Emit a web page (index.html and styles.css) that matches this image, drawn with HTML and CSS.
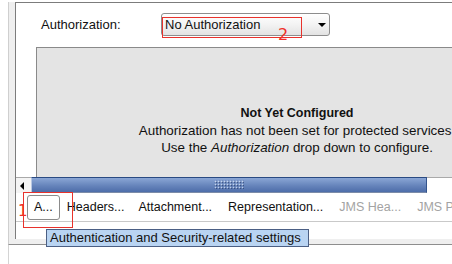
FILE: index.html
```html
<!DOCTYPE html>
<html lang="en">
<head>
    <meta charset="UTF-8">
    <meta name="viewport" content="width=device-width, initial-scale=1.0">
    <title>Security Settings</title>
    <link rel="stylesheet" href="styles.css">
</head>
<body>
    <div class="frame">
        <div class="pane">
            <div class="auth-row">
                <label class="auth-label">Authorization:</label>
                <div class="select">
                    <span>No Authorization</span>
                    <i class="caret"></i>
                </div>
            </div>
            <div class="panel-wrap">
                <div class="panel">
                    <p class="panel-title">Not Yet Configured</p>
                    <p>Authorization has not been set for protected services.</p>
                    <p>Use the <em>Authorization</em> drop down to configure.</p>
                </div>
            </div>
            <div class="hscroll">
                <div class="scroll-btn"><i class="arrow-left"></i></div>
                <div class="thumb"><span class="grip"></span></div>
                <div class="track"></div>
            </div>
            <div class="tabs">
                <span class="tab active">A...</span>
                <span class="tab tab-headers">Headers...</span>
                <span class="tab">Attachment...</span>
                <span class="tab">Representation...</span>
                <span class="tab disabled">JMS Hea...</span>
                <span class="tab disabled">JMS P</span>
            </div>
        </div>
    </div>
    <div class="frame-foot"></div>

    <div class="tooltip">Authentication and Security-related settings</div>

    <div class="mark mark-1"></div>
    <span class="num num-1">1</span>
    <div class="mark mark-2"></div>
    <span class="num num-2">2</span>
</body>
</html>
```

FILE: styles.css
```css
body {
    font-family: "Liberation Sans", Arial, sans-serif;
    font-size: 13px;
    color: #111;
    background-color: #fff;
    margin: 0;
    width: 452px;
    height: 264px;
    overflow: hidden;
    position: relative;
}
.frame {
    margin: 2px 0 0 8px;
    border-left: 1px solid #cfcfcf;
    border-bottom: 1px solid #8e8e8e;
    background-color: #efefef;
    padding: 0 0 5px 6px;
}
.pane {
    background-color: #fff;
    border-left: 1px solid #7c7c7c;
    border-top: 1px solid #7c7c7c;
    height: 236px;
    overflow: hidden;
}
.frame-foot {
    margin-left: 8px;
    border-left: 1px solid #d4d4d4;
    height: 20px;
}

/* ligne Authorization + liste */
.auth-row {
    display: flex;
    align-items: center;
    height: 23px;
    padding: 10px 0 11px 25px;
}
.auth-label {
    width: 120px;
}
.select {
    width: 164px;
    height: 21px;
    border: 1px solid #8d8d8d;
    border-radius: 3px;
    background: linear-gradient(#ffffff, #f3f3f3 50%, #e3e3e3);
    display: flex;
    align-items: center;
    justify-content: space-between;
    padding: 0 0 0 3px;
    box-sizing: content-box;
}
.select span {
    white-space: nowrap;
}
.caret {
    width: 0;
    height: 0;
    border-left: 4px solid transparent;
    border-right: 4px solid transparent;
    border-top: 4px solid #000;
    margin-right: 3px;
}

/* zone grise */
.panel-wrap {
    height: 130px;
    padding-left: 20px;
    overflow: hidden;
}
.panel {
    width: 521px;
    height: 100%;
    background-color: #e4e4e4;
    border-top: 1px solid #8a8a8a;
    border-left: 1px solid #8a8a8a;
    padding-top: 57px;
    box-sizing: border-box;
    text-align: center;
}
.panel p {
    margin: 0;
    font-size: 13.4px;
    line-height: 17px;
    white-space: nowrap;
}
.panel .panel-title {
    font-weight: bold;
    font-size: 12.5px;
}

/* barre de defilement */
.hscroll {
    display: flex;
    height: 16px;
}
.scroll-btn {
    width: 15px;
    border-top: 1px solid #a9a9a9;
    background-color: #f4f4f4;
    display: flex;
    align-items: center;
    padding-left: 4px;
    box-sizing: border-box;
}
.arrow-left {
    width: 0;
    height: 0;
    border-top: 4px solid transparent;
    border-bottom: 4px solid transparent;
    border-right: 4px solid #000;
}
.thumb {
    width: 396px;
    position: relative;
    border-top: 1px solid #2a4a82;
    border-left: 1px solid #b9c8e2;
    border-right: 1px solid #34548c;
    border-bottom: 1px solid #7c8ca8;
    box-sizing: border-box;
    background: linear-gradient(#8aa6d5, #6684bb 55%, #4d6da9);
}
.grip {
    position: absolute;
    left: 182px;
    top: 2px;
    width: 30px;
    height: 9px;
    background-image:
        radial-gradient(circle, rgba(225, 235, 250, 0.75) 0.6px, transparent 1.1px),
        radial-gradient(circle, rgba(30, 50, 95, 0.6) 0.6px, transparent 1.1px);
    background-size: 3px 3px, 3px 3px;
    background-position: 0 0, 1px 1px;
}
.track {
    flex: 1;
    border-top: 1px solid #a9a9a9;
    background-color: #fff;
}

/* onglets */
.tabs {
    display: flex;
    align-items: center;
    height: 28px;
    border-bottom: 1px solid #c9c9c9;
    padding-left: 11px;
    font-size: 12.5px;
    white-space: nowrap;
}
.tab {
    height: 23px;
    line-height: 23px;
    padding: 0 7px;
    border: 1px solid transparent;
    border-radius: 3px;
}
.tab.active {
    border-color: #8b8b8b;
    padding: 0 6px;
}
.tab.tab-headers {
    padding: 0 5px 0 6px;
}
.tab.disabled {
    color: #a3a3a3;
}

/* infobulle */
.tooltip {
    position: absolute;
    left: 46px;
    top: 229px;
    width: 258px;
    height: 16px;
    line-height: 16px;
    padding-left: 3px;
    background-color: #b9d4f2;
    border: 1px solid #4b5f84;
    white-space: nowrap;
    color: #111;
}

/* annotations rouges */
.mark {
    position: absolute;
    border: 1px solid #e8322c;
}
.mark-1 {
    left: 23px;
    top: 192px;
    width: 48px;
    height: 34px;
}
.mark-2 {
    left: 162px;
    top: 17px;
    width: 138px;
    height: 19px;
}
.num {
    position: absolute;
    color: #f03028;
    font-family: "DejaVu Sans", sans-serif;
    font-size: 15px;
    line-height: 1;
}
.num-1 {
    left: 18px;
    top: 204px;
}
.num-2 {
    left: 278px;
    top: 27px;
    font-size: 16px;
}
```
